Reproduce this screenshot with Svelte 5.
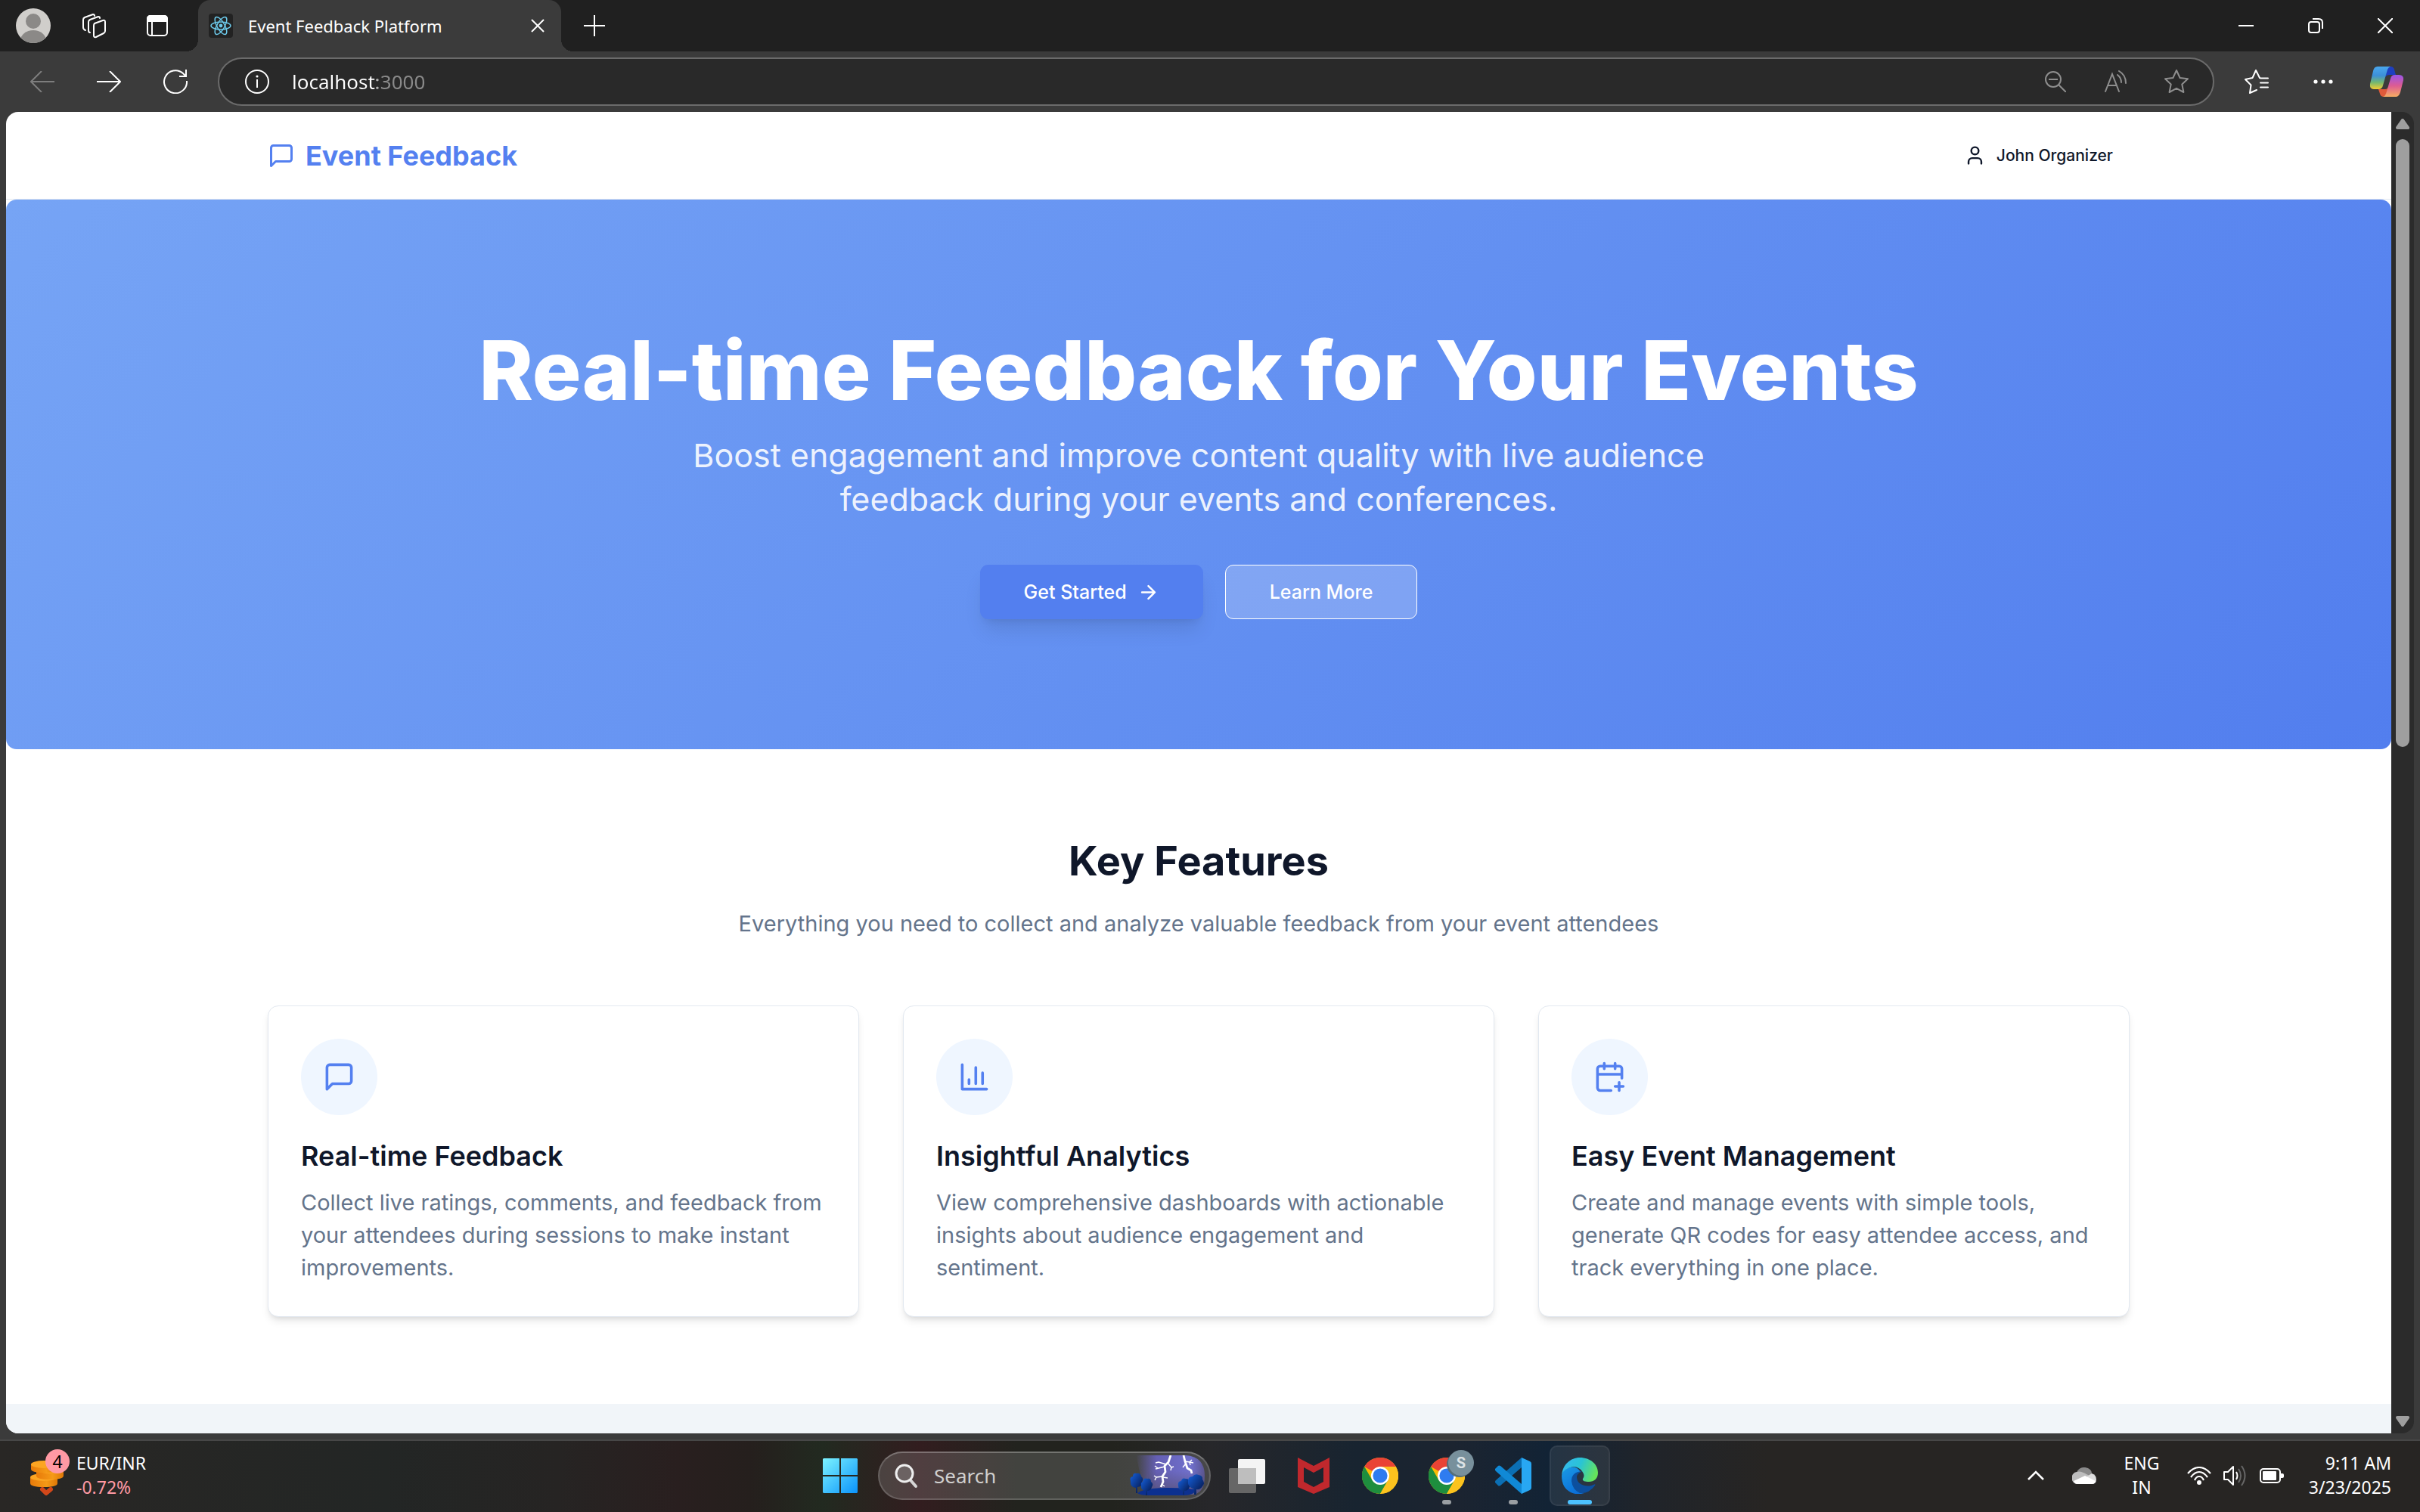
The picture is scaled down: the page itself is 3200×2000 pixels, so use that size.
<script>
  const features = [
    {
      icon: 'message',
      title: 'Real-time Feedback',
      text: 'Collect live ratings, comments, and feedback from your attendees during sessions to make instant improvements.'
    },
    {
      icon: 'chart',
      title: 'Insightful Analytics',
      text: 'View comprehensive dashboards with actionable insights about audience engagement and sentiment.'
    },
    {
      icon: 'calendar',
      title: 'Easy Event Management',
      text: 'Create and manage events with simple tools, generate QR codes for easy attendee access, and track everything in one place.'
    }
  ];
  const bolts = [
    'M54 0 L51 9 L46 14 L47 22 L43 28 L44 35 L41 42',
    'M48 12 L38 9 L34 10 M46 15 L34 18 M37 17 L33 14 M43 28 L35 29 L33 33 M35 29 L32 27 M44 29 L50 30 M50 10 L55 16 L58 15 M55 16 L54 20 M42 38 L46 41',
    'M71 0 L73 8 L76 17 L81 20 L82 24',
    'M73 8 L79 9 L84 10 M74 11 L70 16 M79 9 L82 6 M79 9 L80 13'
  ];
</script>

{#snippet lucide(name, cls)}
  <svg class={cls} viewBox="0 0 24 24" fill="none" stroke="currentColor" stroke-width="2" stroke-linecap="round" stroke-linejoin="round" aria-hidden="true">
    {#if name === 'message'}
      <path d="M21 15a2 2 0 0 1-2 2H7l-4 4V5a2 2 0 0 1 2-2h14a2 2 0 0 1 2 2z" />
    {:else if name === 'chart'}
      <path d="M3 3v18h18M8 17v-3M13 17V5M18 17V9" />
    {:else if name === 'calendar'}
      <path d="M8 2v4M16 2v4M21 13V6a2 2 0 0 0-2-2H5a2 2 0 0 0-2 2v14a2 2 0 0 0 2 2h8M3 10h18M16 19h6M19 16v6" />
    {:else if name === 'user'}
      <path d="M19 21v-2a4 4 0 0 0-4-4H9a4 4 0 0 0-4 4v2" /><circle cx="12" cy="7" r="4" />
    {:else if name === 'arrow'}
      <path d="M5 12h14M12 5l7 7-7 7" />
    {/if}
  </svg>
{/snippet}

{#snippet chrome()}
  <svg class="app-icon" viewBox="0 0 48 48" aria-hidden="true">
    <circle cx="24" cy="24" r="24" fill="#fbbc04" />
    <path d="M24 24L3.2 12A24 24 0 0 1 44.8 12z" fill="#ea4335" />
    <path d="M24 12h20.8L36 18z" fill="#ea4335" />
    <path d="M3.2 12A24 24 0 0 0 24 48L34.4 30 24 24l-10.4 6z" fill="#1e8e3e" />
    <path d="M24 12h20.8A24 24 0 0 1 24 48L34.4 30z" fill="#fcc31e" />
    <circle cx="24" cy="24" r="12" fill="#fff" />
    <circle cx="24" cy="24" r="9.6" fill="#2f7cf0" />
  </svg>
{/snippet}

<div class="desktop">
  <header class="tabstrip">
    <button class="strip-btn" aria-label="Profile">
      <svg width="46" height="46" viewBox="0 0 46 46">
        <defs><clipPath id="avatar"><circle cx="23" cy="23" r="23" /></clipPath></defs>
        <g clip-path="url(#avatar)">
          <rect width="46" height="46" fill="#d0cecb" />
          <circle cx="23" cy="17" r="10" fill="#8b8987" />
          <ellipse cx="23" cy="43" rx="17" ry="14" fill="#8b8987" />
        </g>
      </svg>
    </button>
    <button class="strip-btn" aria-label="Workspaces">
      <svg width="34" height="34" viewBox="0 0 34 34" fill="none" stroke="#fff" stroke-width="2" stroke-linejoin="round" stroke-linecap="round">
        <path d="M18 14l11-4q3-1 3 2v12q0 2-2 3l-10 5q-3 1-3-2V17q0-2 1-3z" />
        <path d="M12 26q-2 0-2-3V12q0-2 2-3l11-4q2 0 2 2" />
        <path d="M6 23q-3-1-3-4V9q0-2 2-3l11-4q2 0 2 2" />
      </svg>
    </button>
    <button class="strip-btn wide" aria-label="Tab actions">
      <svg width="30" height="30" viewBox="0 0 30 30" fill="none" stroke="#fff" stroke-width="2">
        <rect x="2" y="2" width="26" height="26" rx="4" />
        <path d="M2 9V6q0-4 4-4h18q4 0 4 4v3z" fill="#fff" />
        <path d="M8 8v20" />
      </svg>
    </button>
    <div class="tab">
      <svg class="favicon" viewBox="0 0 32 32" fill="none" stroke="#6cc9ea" stroke-width="1.5">
        <rect width="32" height="32" rx="4" fill="#222" stroke="none" />
        <ellipse cx="16" cy="16" rx="13" ry="5" />
        <ellipse cx="16" cy="16" rx="13" ry="5" transform="rotate(60 16 16)" />
        <ellipse cx="16" cy="16" rx="13" ry="5" transform="rotate(120 16 16)" />
        <circle cx="16" cy="16" r="2.4" fill="#6cc9ea" stroke="none" />
      </svg>
      <span class="tab-title">Event Feedback Platform</span>
      <button class="tab-close" aria-label="Close tab">
        <svg width="18" height="18" viewBox="0 0 18 18" stroke="#fff" stroke-width="2"><path d="M1 1l16 16M17 1L1 17" /></svg>
      </button>
    </div>
    <button class="strip-btn wide" aria-label="New tab">
      <svg width="28" height="28" viewBox="0 0 28 28" stroke="#fff" stroke-width="2"><path d="M14 0v28M0 14h28" /></svg>
    </button>
    <div class="window-controls">
      <button aria-label="Minimize"><svg width="20" height="20" viewBox="0 0 20 20" stroke="#fff" stroke-width="2"><path d="M0 10h20" /></svg></button>
      <button aria-label="Restore">
        <svg width="20" height="20" viewBox="0 0 20 20" fill="none" stroke="#fff" stroke-width="2">
          <rect x="1" y="5" width="14" height="14" rx="3" />
          <path d="M6 1h8q5 0 5 5v8" />
        </svg>
      </button>
      <button aria-label="Close"><svg width="20" height="20" viewBox="0 0 20 20" stroke="#fff" stroke-width="2"><path d="M0 0l20 20M20 0L0 20" /></svg></button>
    </div>
  </header>

  <nav class="toolbar" aria-label="Browser toolbar">
    <button class="tool" aria-label="Back" disabled>
      <svg width="32" height="28" viewBox="0 0 32 28" fill="none" stroke="#7d7d7d" stroke-width="2"><path d="M32 14H1M15 0L1 14l14 14" /></svg>
    </button>
    <button class="tool" aria-label="Forward">
      <svg width="32" height="28" viewBox="0 0 32 28" fill="none" stroke="#fff" stroke-width="2"><path d="M0 14h31M17 0l14 14-14 14" /></svg>
    </button>
    <button class="tool" aria-label="Reload">
      <svg width="32" height="32" viewBox="0 0 32 32" fill="none" stroke="#fff" stroke-width="2"><path d="M31 15a15 15 0 1 1-5-10l3 3M30 0v9h-9" /></svg>
    </button>
    <div class="address">
      <button class="info" aria-label="Site information">
        <svg width="32" height="32" viewBox="0 0 32 32" fill="none" stroke="#fff" stroke-width="2"><circle cx="16" cy="16" r="15" /><path d="M16 13v11" /><circle cx="16" cy="9" r="1.6" fill="#fff" stroke="none" /></svg>
      </button>
      <input class="url" aria-label="Address" value="localhost:3000" />
      <button class="addr-btn" aria-label="Zoom out">
        <svg width="28" height="28" viewBox="0 0 28 28" fill="none" stroke="#8e8e8e" stroke-width="2"><circle cx="11" cy="11" r="10" /><path d="M18 18l10 10M5 11h12" /></svg>
      </button>
      <button class="addr-btn" aria-label="Read aloud">
        <svg width="32" height="30" viewBox="0 0 32 30" fill="none" stroke="#8e8e8e" stroke-width="2" stroke-linecap="round"><path d="M2 28L11 5l9 23M5 20h12M18 6q5 4 5 10M20 1q9 5 9 16" /></svg>
      </button>
      <button class="addr-btn" aria-label="Add to favorites">
        <svg width="32" height="32" viewBox="0 0 32 32" fill="none" stroke="#8e8e8e" stroke-width="2" stroke-linejoin="round"><path d="M16 1l4.600 10 10.400 1.200-7.700 7.300 2.100 10.500-9.400-5.200L6.600 30l2.100-10.500L1 12.200 11.400 11z" /></svg>
      </button>
    </div>
    <div class="tool-end">
      <button class="tool" aria-label="Favorites">
        <svg width="32" height="32" viewBox="0 0 32 32" fill="none" stroke="#fff" stroke-width="2" stroke-linejoin="round" stroke-linecap="round"><path d="M16 27l-9 4 1.500-10.500L1 13l9.500-2L15 1l5 10M21 11.500h10M21 17.500h10M21 23.500h10" /></svg>
      </button>
      <button class="tool" aria-label="Settings and more">
        <svg width="28" height="8" viewBox="0 0 28 8" fill="#fff"><circle cx="4" cy="4" r="2.600" /><circle cx="14" cy="4" r="2.600" /><circle cx="24" cy="4" r="2.600" /></svg>
      </button>
      <button class="tool copilot" aria-label="Copilot">
        <svg width="46" height="42" viewBox="0 0 46 42">
          <defs>
            <linearGradient id="cpA" x1="0" y1="0" x2="0" y2="1"><stop offset="0" stop-color="#4aa8ee" /><stop offset=".4" stop-color="#3c8fd8" /><stop offset=".7" stop-color="#74b870" /><stop offset="1" stop-color="#f5cc33" /></linearGradient>
            <linearGradient id="cpB" x1="0" y1="0" x2="0" y2="1"><stop offset="0" stop-color="#9a55e8" /><stop offset=".5" stop-color="#dd5c93" /><stop offset="1" stop-color="#f6ad62" /></linearGradient>
          </defs>
          <path d="M24 1h4q4 0 5 4l2 7h-9q-3 0-5 3z" fill="#1e3fc0" />
          <path d="M22 41h-3q-4 0-5-4l-2-6h9q3 0 4-3z" fill="#df5a3a" />
          <path d="M11 1h17q-3 1-4 4l-6 21q-1 5-6 5H6q-6 0-5-7L5 7q1-6 6-6z" fill="url(#cpA)" />
          <path d="M35 41H18q3-1 4-4l6-20q1-5 6-5h5q7 0 6 7l-4 16q-2 6-6 6z" fill="url(#cpB)" />
        </svg>
      </button>
    </div>
  </nav>

  <div class="viewport">
    <div class="page">
      <header class="site-header">
        <div class="container header-row">
          <a class="brand" href="#home">{@render lucide('message', 'brand-icon')}Event Feedback</a>
          <button class="account">{@render lucide('user', 'small-icon')}John Organizer</button>
        </div>
      </header>
      <main>
        <section class="hero">
          <h1>Real-time Feedback for Your Events</h1>
          <p>Boost engagement and improve content quality with live audience feedback during your events and conferences.</p>
          <div class="actions">
            <button class="cta primary">Get Started{@render lucide('arrow', 'small-icon')}</button>
            <button class="cta outline">Learn More</button>
          </div>
        </section>
        <section class="features">
          <div class="container">
            <h2>Key Features</h2>
            <p class="lead">Everything you need to collect and analyze valuable feedback from your event attendees</p>
            <div class="cards">
              {#each features as f (f.title)}
                <article class="card">
                  <div class="badge">{@render lucide(f.icon, 'feature-icon')}</div>
                  <h3>{f.title}</h3>
                  <p>{f.text}</p>
                </article>
              {/each}
            </div>
          </div>
        </section>
      </main>
      <div class="next-section"></div>
    </div>
    <div class="scrollbar" aria-hidden="true">
      <svg width="18" height="14" viewBox="0 0 18 14"><path d="M9 2l7 10H2z" fill="#9f9f9f" stroke="#9f9f9f" stroke-width="4" stroke-linejoin="round" /></svg>
      <div class="track"><div class="thumb"></div></div>
      <svg width="18" height="14" viewBox="0 0 18 14"><path d="M9 12l7-10H2z" fill="#9f9f9f" stroke="#9f9f9f" stroke-width="4" stroke-linejoin="round" /></svg>
    </div>
  </div>

  <footer class="taskbar">
    <button class="widget">
      <span class="coins">
        <svg width="48" height="50" viewBox="0 0 48 50" aria-hidden="true">
          <defs><linearGradient id="coin" x1="0" x2="1"><stop offset="0" stop-color="#e87b0a" /><stop offset=".6" stop-color="#f59a17" /><stop offset="1" stop-color="#de7807" /></linearGradient></defs>
          <path d="M0 23v8q0 5 18 5t18-5v-8z" fill="url(#coin)" /><ellipse cx="18" cy="23" rx="18" ry="5" fill="#fca522" />
          <path d="M8 13v8q0 5 18 5t18-5v-8z" fill="url(#coin)" /><ellipse cx="26" cy="13" rx="18" ry="5" fill="#fca522" />
          <path d="M1 5v7q0 5 17 5t17-5V5z" fill="url(#coin)" /><ellipse cx="18" cy="6" rx="17" ry="5" fill="#fca522" />
          <path d="M16 39l5 5 6-5" fill="none" stroke="#d2481a" stroke-width="6" stroke-linecap="round" stroke-linejoin="round" />
        </svg>
        <span class="count">4</span>
      </span>
      <span class="stack left"><span>EUR/INR</span><span class="down">-0.72%</span></span>
    </button>

    <div class="apps">
      <button class="app" aria-label="Start">
        <svg width="46" height="46" viewBox="0 0 46 46">
          <defs><linearGradient id="win" x1="0" y1="0" x2="46" y2="46" gradientUnits="userSpaceOnUse"><stop offset="0" stop-color="#7cf3ff" /><stop offset="1" stop-color="#0a93fb" /></linearGradient></defs>
          <path d="M1 0h21v22H0V1zM24 0h21l1 1v21H24zM0 24h22v22H1l-1-1zM24 24h22v21l-1 1H24z" fill="url(#win)" />
        </svg>
      </button>
      <label class="search">
        <svg width="32" height="34" viewBox="0 0 32 34" fill="none"><path d="M21 23l7 8" stroke="#d6d6d6" stroke-width="4" stroke-linecap="round" /><circle cx="13" cy="14" r="11" fill="#6b6262" stroke="#eee" stroke-width="3" /></svg>
        <input aria-label="Search" placeholder="Search" />
        <svg class="storm" width="100" height="54" viewBox="0 0 100 54" aria-hidden="true">
          <defs>
            <linearGradient id="sky" x1="0" x2="1"><stop offset="0" stop-color="#655fb4" stop-opacity="0" /><stop offset=".3" stop-color="#655fb4" /><stop offset=".8" stop-color="#7070cc" /><stop offset="1" stop-color="#5a5590" /></linearGradient>
            <linearGradient id="skyfade" x1="0" x2="0" y1="0" y2="1"><stop offset=".4" stop-color="#55506f" stop-opacity="0" /><stop offset="1" stop-color="#55506f" stop-opacity=".8" /></linearGradient>
            <linearGradient id="tree" x1="0" y1="0" x2="1" y2="1"><stop offset="0" stop-color="#1560dc" /><stop offset="1" stop-color="#04103c" /></linearGradient>
          </defs>
          <path d="M8 0h66q25 2 25 27T80 52H20z" fill="url(#sky)" />
          <path d="M24 0h50q25 2 25 27T80 52H24z" fill="url(#skyfade)" />
          <path d="M10 50q10-7 40-7t38 3q-4 7-16 7H24q-10 0-14-3z" fill="#0c3090" />
          {#each bolts as d, i}
            <path {d} fill="none" stroke="#fff" stroke-width={i % 2 ? 1.4 : 2.8} stroke-linejoin="round" />
          {/each}
          <g fill="url(#tree)">
            <path d="M1 34q-2-5 3-6 0-5 5-4 5-1 6 4 4 3 1 7 1 6-6 7v8H8v-7q-8-1-7-9z" />
            <path d="M15 40q-1-4 2-5 1-6 6-4 5-1 5 4 4 3 1 7-1 5-6 5v6h-2v-6q-7-1-6-7z" />
            <path d="M64 40q-1-6 4-6 1-5 6-3 5 0 5 5 3 3 0 6-2 5-7 5v5h-2v-5q-6-1-6-7z" />
            <path d="M77 34q0-6 6-6 3-4 8-2 6 1 5 6 4 5 0 9-3 5-8 4v7h-3v-7q-9-3-8-11z" />
          </g>
        </svg>
      </label>
      <button class="app" aria-label="Task view">
        <svg width="48" height="48" viewBox="0 0 48 48">
          <rect x="12" y="2" width="36" height="33" rx="2" fill="#f4f4f4" />
          <rect x="0" y="14" width="36" height="33" rx="2" fill="#666" />
          <rect x="12" y="14" width="24" height="21" fill="#bebebe" />
        </svg>
      </button>
      <button class="app" aria-label="McAfee">
        <svg width="42" height="48" viewBox="0 0 42 48"><path fill-rule="evenodd" d="M0 0l21 11L42 0v39L21 48 0 39zM8 13v19l13 7 13-7V13l-13 7z" fill="#c0282d" /></svg>
      </button>
      <button class="app" aria-label="Chrome">{@render chrome()}</button>
      <button class="app" aria-label="Chrome, profile S">
        {@render chrome()}
        <span class="profile back"></span><span class="profile">S</span>
        <span class="running"></span>
      </button>
      <button class="app" aria-label="Visual Studio Code">
        <svg class="app-icon" viewBox="0 0 48 48">
          <path d="M0 33l4 4q1 1 3 0L35 13V0L1 30q-2 2-1 3z" fill="#0b6fb4" />
          <path d="M0 15l4-4q1-1 3 0l28 24v13L1 18q-2-2-1-3z" fill="#1089d6" />
          <path d="M35 0l11 5q2 1 2 3v32q0 2-2 3l-11 5z" fill="#28a7f3" />
        </svg>
        <span class="running"></span>
      </button>
      <button class="app active" aria-label="Microsoft Edge">
        <svg class="app-icon" viewBox="0 0 48 48">
          <defs>
            <linearGradient id="eg1" x1="0" y1=".2" x2="1" y2=".5"><stop offset="0" stop-color="#35b8f1" /><stop offset=".5" stop-color="#2ac4d4" /><stop offset="1" stop-color="#66e45a" /></linearGradient>
            <linearGradient id="eg2" x1="0" y1="0" x2=".6" y2="1"><stop offset="0" stop-color="#1a9ae6" /><stop offset="1" stop-color="#0b6fd8" /></linearGradient>
          </defs>
          <path d="M0 24q0 16 12 22 8 4 18 1Q16 44 17 30q1-8 8-11-5-8-14-6Q1 15 0 24z" fill="url(#eg2)" />
          <path d="M0 24C1 9 12 0 24 0c14 0 24 9 24 20 0 8-5 12-12 12-5 0-9-1-8-4 3-4 1-7-1-10-4-6-12-7-18-4Q1 17 0 24z" fill="url(#eg1)" />
          <path d="M27 18q-14 1-14 13 1 11 11 16 12 1 20-10c1-2 0-2-2-1-9 4-22 0-22-10q0-5 7-8z" fill="#0c4f9e" />
        </svg>
        <span class="running on"></span>
      </button>
    </div>

    <div class="tray">
      <button class="tray-btn" aria-label="Show hidden icons"><svg width="24" height="14" viewBox="0 0 24 14" fill="none" stroke="#fff" stroke-width="2.500"><path d="M2 12L12 2l10 10" /></svg></button>
      <button class="tray-btn cloud" aria-label="OneDrive">
        <svg width="32" height="22" viewBox="0 0 32 22">
          <path d="M6 7a10 8 0 0 1 20 2l-8 5z" fill="#8a8a8a" />
          <path d="M7 22a7 8 0 0 1-1-16q5-2 13 3l8 4-15 9z" fill="#bdbdbd" />
          <path d="M18 13l8-5q6 2 6 8t-6 6z" fill="#ddd" />
          <path d="M2 18l15-7 14 7q-1 4-5 4H7q-4 0-5-4z" fill="#fff" />
        </svg>
      </button>
      <button class="stack lang"><span>ENG</span><span>IN</span></button>
      <button class="status" aria-label="Network, volume and battery">
        <svg width="32" height="24" viewBox="0 0 32 24" fill="none" stroke="#fff" stroke-width="2.200"><path d="M1 9Q8 1 16 1t15 8M5 14q5-7 11-7t11 7M10 18q2-5 6-5t6 5" /><circle cx="16" cy="21" r="3" fill="#fff" stroke="none" /></svg>
        <svg width="32" height="30" viewBox="0 0 32 30" fill="none" stroke-width="2"><path d="M1 10h5l7-7v24l-7-7H1z" stroke="#fff" stroke-linejoin="round" /><path d="M17 10q3 5 0 10" stroke="#fff" /><path d="M20 6q6 9 0 18M24 2q9 13 0 26" stroke="#666" /></svg>
        <svg width="32" height="22" viewBox="0 0 32 22"><rect x="1" y="2" width="26" height="18" rx="4" fill="none" stroke="#fff" stroke-width="2" /><rect x="4" y="5" width="18" height="12" rx="1" fill="#fff" /><path d="M28 8h2q2 0 2 2v2q0 2-2 2h-2z" fill="#fff" /></svg>
      </button>
      <button class="stack clock"><span>9:11 AM</span><span>3/23/2025</span></button>
    </div>
  </footer>
</div>

<style>
  :global(body) { margin: 0; background: #3b3b3b; }
  * { box-sizing: border-box; }
  h1, h2, h3, p { margin: 0; }
  button { border: 0; padding: 0; background: none; color: inherit; font: inherit; display: flex; align-items: center; justify-content: center; }
  input { min-width: 0; border: 0; outline: 0; padding: 0; background: none; font: inherit; }
  svg { display: block; flex: none; }
  .desktop { height: 100vh; display: flex; flex-direction: column; overflow: hidden; background: #3b3b3b; color: #fff; font-family: "Noto Sans", "Open Sans", sans-serif; font-size: 22px; }

  .tabstrip { display: flex; height: 68px; flex: none; background: #202020; padding-left: 4px; }
  .strip-btn { width: 80px; }
  .strip-btn.wide { width: 88px; }
  .tab { position: relative; display: flex; align-items: center; width: 480px; margin-left: 10px; padding: 0 22px 0 14px; background: #3b3b3b; border-radius: 16px 16px 0 0; }
  .tab::before, .tab::after { content: ""; position: absolute; bottom: 0; width: 16px; height: 16px; }
  .tab::before { right: 100%; background: radial-gradient(circle at 0 0, #202020 16px, #3b3b3b 16px); }
  .tab::after { left: 100%; background: radial-gradient(circle at 100% 0, #202020 16px, #3b3b3b 16px); }
  .favicon { width: 32px; height: 32px; }
  .tab-title { flex: 1; margin-left: 20px; white-space: nowrap; }
  .window-controls { display: flex; margin-left: auto; }
  .window-controls button { width: 92px; }

  .toolbar { display: flex; align-items: center; flex: none; height: 80px; padding: 0 4px 0 12px; }
  .tool { width: 88px; height: 64px; flex: none; }
  .tool.copilot { width: 80px; }
  .tool-end { display: flex; margin-left: 12px; }
  .address { flex: 1; display: flex; align-items: center; height: 64px; margin-left: 12px; padding: 0 8px 0 34px; border: 2px solid #6b6b6b; border-radius: 32px; background: #292929; }
  .addr-btn { width: 80px; height: 60px; }
  .url { flex: 1; margin-left: 30px; font-size: 26px; color: transparent; background: linear-gradient(to right, #fff 113px, #8a8a8a 113px); background-clip: text; -webkit-background-clip: text; }

  .viewport { flex: 1; min-height: 0; display: flex; margin: 0 8px 8px; border-radius: 16px; overflow: hidden; }
  .page { flex: 1; display: flex; flex-direction: column; overflow: hidden; background: #fff; color: #0f172a; font-family: Inter, sans-serif; }
  .scrollbar { width: 30px; display: flex; flex-direction: column; align-items: center; padding: 9px 0; background: #2b2b2b; }
  .track { flex: 1; width: 18px; padding: 13px 0; }
  .thumb { height: 48%; border-radius: 9px; background: #9f9f9f; }

  .container { width: 100%; max-width: 2520px; margin: 0 auto; padding: 0 29px; }
  .site-header { flex: none; border-bottom: 1px solid #e2e8f0; }
  .header-row { display: flex; align-items: center; justify-content: space-between; height: 115px; }
  .brand { display: flex; align-items: center; gap: 14px; color: #5480f0; font-size: 36px; line-height: 50px; font-weight: 700; text-decoration: none; }
  .brand-icon { width: 36px; height: 36px; }
  .account { gap: 14px; padding: 0 22px; height: 64px; font-size: 21px; font-weight: 500; }
  .small-icon { width: 29px; height: 29px; }

  main { flex: none; }
  .hero { display: flex; flex-direction: column; align-items: center; padding: 172px 58px; border-radius: 14px; background: linear-gradient(135deg, #76a4f5, #527eee); color: #fff; text-align: center; }
  .hero h1 { font-size: 108px; line-height: 108px; font-weight: 800; }
  .hero p { max-width: 1382px; margin-top: 29px; font-size: 43px; line-height: 58px; color: rgba(255, 255, 255, 0.9); }
  .actions { display: flex; gap: 29px; margin-top: 58px; }
  .cta { height: 72px; padding: 0 58px; gap: 14px; border-radius: 11px; font-size: 25px; font-weight: 500; }
  .cta.primary { background: #537fef; box-shadow: 0 18px 27px -5px rgba(0, 0, 0, 0.1), 0 7px 11px -7px rgba(0, 0, 0, 0.1); }
  .cta.outline { border: 1px solid #fff; background: rgba(255, 255, 255, 0.2); }

  .features { padding: 115px 0; }
  .features h2 { font-size: 54px; line-height: 65px; font-weight: 700; text-align: center; }
  .lead { margin-top: 29px; font-size: 29px; line-height: 43px; text-align: center; color: #64748b; }
  .cards { display: grid; grid-template-columns: repeat(3, 1fr); gap: 58px; margin-top: 87px; }
  .card { padding: 43px; border: 1px solid #e2e8f0; border-radius: 14px; background: #fff; box-shadow: 0 7px 11px -2px rgba(0, 0, 0, 0.1), 0 4px 7px -4px rgba(0, 0, 0, 0.1); }
  .badge { display: flex; align-items: center; justify-content: center; width: 101px; height: 101px; border-radius: 50%; background: #eff6ff; color: #5480f0; }
  .feature-icon { width: 43px; height: 43px; }
  .card h3 { margin-top: 29px; font-size: 36px; line-height: 51px; font-weight: 600; }
  .card p { margin-top: 14px; font-size: 29px; line-height: 43px; color: #64748b; }
  .next-section { flex: 1; background: #f1f5f9; }

  .taskbar { flex: none; display: grid; grid-template-columns: 1fr auto 1fr; align-items: center; height: 96px; padding-bottom: 2px; border-top: 2px solid #474747; font-size: 23px; background: linear-gradient(to right, #292725 0, #232625 16%, #262423 23%, #291f1f 28%, #251f1d 31%, #222a20 34%, #321d1f 38%, #22231e 42%, #22231e 46%, #27272a 50%, #182430 56%, #1c2430 60%, #122335 64%, #20242a 68%, #272523 73%, #272523 100%); }
  .widget { justify-self: start; gap: 17px; padding-left: 40px; height: 80px; }
  .coins { position: relative; display: block; width: 44px; padding-top: 8px; }
  .count { position: absolute; top: -6px; left: 20px; width: 32px; height: 32px; border-radius: 50%; background: #ff99a4; color: #000; line-height: 32px; }
  .stack { display: flex; flex-direction: column; align-items: center; padding-bottom: 2px; line-height: 32px; }
  .stack.left { align-items: flex-start; }
  .down { color: #ff99a4; }
  .apps { display: flex; gap: 8px; align-items: center; }
  .app { position: relative; width: 80px; height: 80px; border-radius: 10px; }
  .app.active { background: rgba(255, 255, 255, 0.08); border: 2px solid rgba(255, 255, 255, 0.06); }
  .app-icon { width: 48px; height: 48px; }
  .search { display: flex; align-items: center; width: 440px; height: 64px; margin-left: 2px; padding: 0 5px 0 20px; border: 2px solid rgba(255, 255, 255, 0.16); border-top-color: rgba(255, 255, 255, 0.26); border-radius: 32px; background: rgba(255, 255, 255, 0.15); }
  .search input { flex: 1; margin-left: 20px; font-size: 26px; color: #ccc; }
  .search input::placeholder { color: #d0cfce; opacity: 1; }
  .profile { position: absolute; top: 6px; left: 42px; width: 34px; height: 34px; border-radius: 50%; background: #78909c; color: #dde3e6; font: 700 20px/34px Roboto, sans-serif; }
  .profile.back { top: 8px; left: 40px; background: #546e7a; }
  .running { position: absolute; bottom: 2px; left: 50%; width: 12px; height: 6px; margin-left: -6px; border-radius: 3px; background: #9a9fa3; }
  .running.on { bottom: 0; width: 32px; margin-left: -16px; background: #4cc2ff; }
  .tray { display: flex; align-items: center; justify-content: flex-end; padding-right: 38px; }
  .tray-btn { width: 64px; height: 80px; }
  .lang { width: 88px; }
  .status { gap: 16px; margin: 0 16px; height: 80px; }
  .clock { align-items: flex-end; width: 126px; }
</style>
